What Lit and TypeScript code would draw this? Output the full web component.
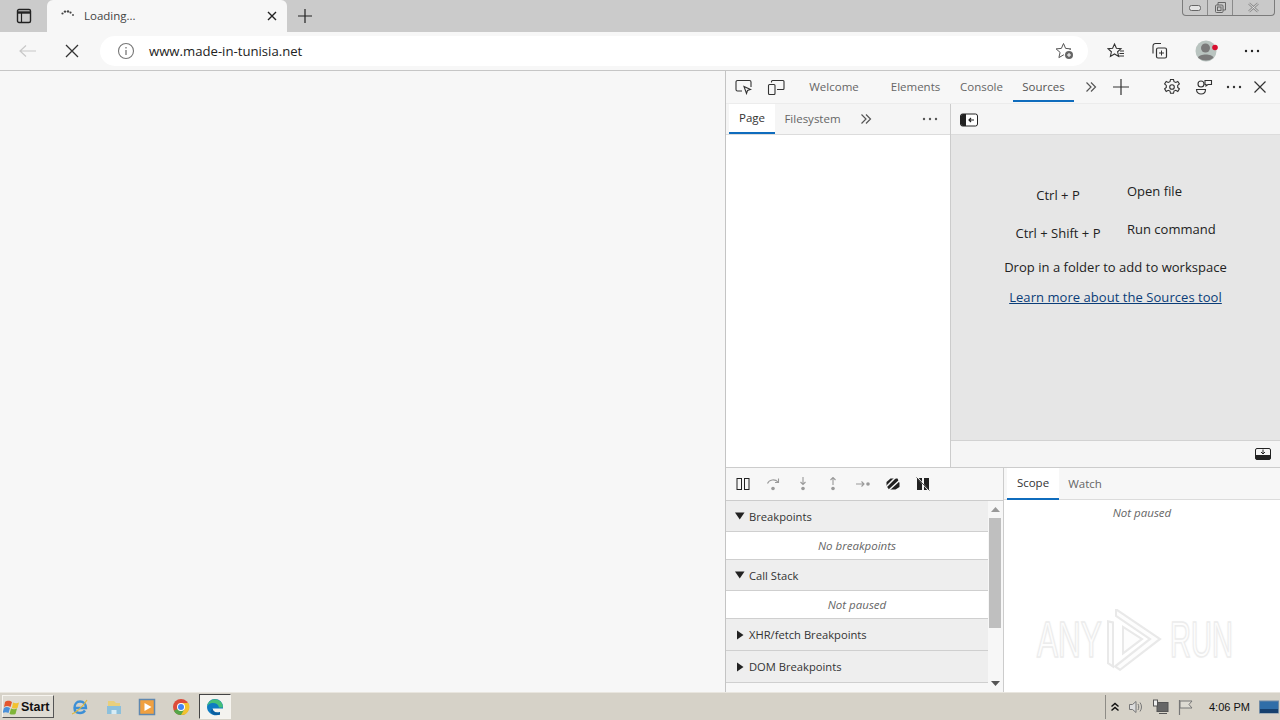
import { LitElement, html, css, svg } from "lit";
import { customElement } from "lit/decorators.js";

const icon = (w: number, h: number, body: unknown) => html`<svg
  width=${w}
  height=${h}
  viewBox="0 0 ${w} ${h}"
  fill="none"
  stroke="currentColor"
  stroke-width="1"
>
  ${body}
</svg>`;

const dots = (c = "#333") => icon(18, 4, svg`<g fill=${c} stroke="none"><circle cx="3" cy="2" r="1.2"/><circle cx="9" cy="2" r="1.2"/><circle cx="15" cy="2" r="1.2"/></g>`);
const chevrons = icon(12, 12, svg`<path d="M1.5 1.5 6 6l-4.5 4.5M6 1.5 10.5 6 6 10.5" stroke-width="1.2"/>`);

@customElement("app-root")
export class AppRoot extends LitElement {
  static styles = css`
    :host {
      display: flex;
      flex-direction: column;
      width: 1280px;
      height: 720px;
      overflow: hidden;
      font-family: "Open Sans", "Noto Sans", sans-serif;
      font-size: 11.5px;
      color: #333;
      background: #f7f7f7;
    }

    /* title strip */
    .strip {
      height: 32px;
      flex: none;
      display: flex;
      background: #cbcbcb;
      position: relative;
    }
    .strip-btn {
      width: 47px;
      display: flex;
      align-items: center;
      justify-content: center;
      color: #222;
    }
    .tab {
      width: 240px;
      height: 32px;
      box-sizing: border-box;
      background: #f7f7f7;
      border-radius: 6px 6px 0 0;
      display: flex;
      align-items: center;
      padding: 0 9px 1px 14px;
      gap: 9px;
      font-size: 11.5px;
      color: #444;
    }
    .tab span {
      flex: 1;
    }
    .newtab {
      width: 36px;
      display: flex;
      align-items: center;
      justify-content: center;
      color: #222;
    }
    .caption {
      position: absolute;
      right: 0;
      top: 0;
      width: 93px;
      height: 16px;
      box-sizing: border-box;
      margin-right: 5px;
      display: grid;
      grid-template-columns: 25px 25px 1fr;
      border: 1px solid #7b7b7b;
      border-top: none;
      border-radius: 0 0 4px 4px;
      background: #c9c9c9;
    }
    .caption div {
      display: flex;
      align-items: center;
      justify-content: center;
      border-right: 1px solid #8a8a8a;
      color: #666;
    }
    .caption div:last-child {
      border-right: none;
    }

    /* address toolbar */
    .toolbar {
      height: 39px;
      flex: none;
      box-sizing: border-box;
      display: flex;
      align-items: center;
      border-bottom: 1px solid #c6c6c6;
      background: #f7f7f7;
    }
    .nav-btn {
      display: flex;
      justify-content: center;
      flex: none;
    }
    .nav-btn.first {
      width: 56px;
      color: #c8c8c8;
    }
    .nav-btn.stop {
      width: 30px;
      margin-left: 1px;
      margin-right: 13px;
      color: #333;
    }
    .url {
      width: 988px;
      flex: none;
      height: 30px;
      box-sizing: border-box;
      background: #fff;
      border-radius: 15px;
      display: flex;
      align-items: center;
      padding: 0 14px 0 17px;
      gap: 14px;
      font-size: 13.15px;
      color: #222;
    }
    .url span {
      flex: 1;
    }
    .tools {
      display: flex;
      align-items: center;
      margin-left: 12px;
    }
    .tool {
      width: 32px;
      display: flex;
      justify-content: center;
      align-items: center;
      color: #333;
      margin-right: 11px;
    }
    .tool.avatar {
      margin-left: 5px;
    }
    .tool.more {
      margin: 0 0 0 2px;
    }

    /* main split */
    .main {
      flex: 1;
      min-height: 0;
      display: flex;
    }
    .page {
      width: 725px;
      flex: none;
      background: #f7f7f7;
    }
    .devtools {
      flex: 1;
      min-width: 0;
      display: flex;
      flex-direction: column;
      border-left: 1px solid #c4c4c4;
      background: #fff;
    }
    .dt-bar {
      height: 33px;
      flex: none;
      box-sizing: border-box;
      display: flex;
      align-items: center;
      background: #f7f7f7;
      border-bottom: 1px solid #ececec;
      color: #666;
    }
    .dt-ic {
      display: flex;
      align-items: center;
      justify-content: center;
      width: 32px;
      flex: none;
      color: #333;
    }
    .dt-ic.first {
      margin-left: 2px;
    }
    .dt-ic.chev {
      width: 33px;
      color: #555;
    }
    .dt-ic.plus {
      width: 30px;
      margin-left: -1px;
    }
    .dt-ic.more {
      width: 28px;
    }
    .dt-ic.close {
      width: 24px;
      margin-right: 8px;
    }
    .dt-tab {
      height: 31px;
      align-self: flex-start;
      box-sizing: border-box;
      display: flex;
      align-items: center;
      justify-content: center;
      padding-top: 1px;
      border-bottom: 2px solid transparent;
      flex: none;
    }
    .dt-tab.welcome {
      width: 82px;
      margin-left: 1px;
    }
    .dt-tab.elements {
      width: 81px;
    }
    .dt-tab.console {
      width: 51px;
    }
    .dt-tab.sources {
      width: 61px;
      margin-left: 6px;
      border-bottom-color: #0f6cbd;
      color: #555;
    }
    .dt-right {
      margin-left: auto;
      display: flex;
      align-items: center;
    }

    .upper {
      height: 363px;
      flex: none;
      display: flex;
      border-bottom: 1px solid #ccc;
    }
    .navigator {
      width: 224px;
      flex: none;
      display: flex;
      flex-direction: column;
      border-right: 1px solid #ccc;
      background: #fff;
    }
    .nav-tabs {
      height: 31px;
      flex: none;
      display: flex;
      align-items: flex-start;
      padding-left: 3px;
      background: #f5f5f5;
      border-bottom: 1px solid #dcdcdc;
      box-sizing: border-box;
      color: #666;
    }
    .nav-tab {
      height: 30px;
      box-sizing: border-box;
      display: flex;
      align-items: center;
      justify-content: center;
      flex: none;
    }
    .nav-tab.on {
      width: 46px;
      padding-bottom: 1px;
      background: #fff;
      border-bottom: 2px solid #0f6cbd;
      color: #333;
    }
    .nav-tab.fs {
      width: 75px;
      padding-bottom: 2px;
    }
    .nav-ic {
      height: 30px;
      display: flex;
      align-items: center;
      justify-content: center;
      flex: none;
      width: 28px;
      margin-left: 2px;
      color: #555;
    }
    .nav-ic.more {
      width: 32px;
      margin-left: auto;
      margin-right: 4px;
    }
    .editor {
      flex: 1;
      min-width: 0;
      display: flex;
      flex-direction: column;
      background: #e6e6e6;
    }
    .ed-top {
      height: 31px;
      flex: none;
      box-sizing: border-box;
      display: flex;
      align-items: center;
      padding: 1px 0 0 9px;
      background: #f5f5f5;
      border-bottom: 1px solid #dcdcdc;
    }
    .ed-body {
      flex: 1;
      display: flex;
      flex-direction: column;
      align-items: center;
      color: #222;
      font-size: 13px;
      padding-top: 47px;
    }
    .shortcuts {
      display: grid;
      grid-template-columns: 100px 96px;
      column-gap: 19px;
      row-gap: 16px;
      margin-bottom: 16px;
    }
    .key {
      text-align: center;
      padding-top: 4px;
      line-height: 18px;
      white-space: nowrap;
    }
    .cmd {
      line-height: 18px;
      white-space: nowrap;
    }
    .drop {
      line-height: 18px;
      letter-spacing: 0.03px;
    }
    .learn {
      margin-top: 12px;
      line-height: 18px;
      color: #0b3d78;
      text-decoration: underline;
      letter-spacing: 0.05px;
    }
    .ed-bottom {
      height: 27px;
      flex: none;
      box-sizing: border-box;
      display: flex;
      align-items: center;
      justify-content: flex-end;
      padding-right: 9px;
      background: #f5f5f5;
      border-top: 1px solid #d2d2d2;
    }

    .lower {
      flex: 1;
      min-height: 0;
      display: flex;
    }
    .debug {
      width: 277px;
      flex: none;
      display: flex;
      flex-direction: column;
      background: #f7f7f7;
      border-right: 1px solid #ccc;
    }
    .dbg-bar {
      height: 33px;
      flex: none;
      box-sizing: border-box;
      display: flex;
      align-items: center;
      padding-left: 2px;
      border-bottom: 1px solid #ccc;
    }
    .dbg-bar div {
      width: 30px;
      display: flex;
      justify-content: center;
      color: #9a9a9a;
    }
    .dbg-bar div.dark {
      color: #222;
    }
    .dbg-body {
      flex: 1;
      min-height: 0;
      display: flex;
    }
    .sections {
      width: 262px;
      flex: none;
      overflow: hidden;
    }
    .sec {
      height: 31px;
      box-sizing: border-box;
      display: flex;
      align-items: center;
      gap: 4px;
      padding-left: 9px;
      background: #eeeeee;
      border-bottom: 1px solid #cfcfcf;
      color: #333;
      font-size: 11.2px;
    }
    .sec.tall {
      height: 32px;
    }
    .empty {
      height: 28px;
      box-sizing: border-box;
      display: flex;
      align-items: center;
      justify-content: center;
      background: #fff;
      border-bottom: 1px solid #cfcfcf;
      font-style: italic;
      color: #666;
    }
    .scroll {
      flex: 1;
      display: flex;
      flex-direction: column;
      align-items: center;
      background: #f7f7f7;
      margin-right: 1px;
    }
    .arrow {
      height: 17px;
      flex: none;
      display: flex;
      align-items: center;
      justify-content: center;
    }
    .track {
      flex: 1;
      width: 12px;
    }
    .thumb {
      height: 110px;
      background: #bfbfbf;
    }

    .scope {
      flex: 1;
      min-width: 0;
      display: flex;
      flex-direction: column;
      position: relative;
      background: #fff;
    }
    .scope-tabs {
      height: 32px;
      flex: none;
      display: flex;
      align-items: center;
      background: #f7f7f7;
      border-bottom: 1px solid #dcdcdc;
      box-sizing: border-box;
      color: #666;
      padding-left: 3px;
    }
    .scope-tab {
      height: 32px;
      box-sizing: border-box;
      display: flex;
      align-items: center;
      justify-content: center;
      width: 52px;
      flex: none;
    }
    .scope-tab.on {
      background: #fff;
      border-bottom: 2px solid #0f6cbd;
      color: #333;
    }
    .paused {
      text-align: center;
      font-style: italic;
      color: #666;
      padding-top: 5px;
    }
    .mark {
      position: absolute;
      left: 33px;
      top: 141px;
      display: flex;
      align-items: center;
      gap: 2px;
      font-family: "Liberation Sans", sans-serif;
      font-size: 50px;
      line-height: 62px;
      color: #fdfdfd;
      -webkit-text-stroke: 1.5px #ececec;
      text-shadow: 0 0 3px #eeeeee;
    }
    .mark b {
      font-weight: 400;
      display: inline-block;
      transform-origin: left center;
      width: 65px;
      transform: scaleX(0.63);
      white-space: nowrap;
    }
    .mark b.r {
      width: 62px;
      margin-left: 4px;
      transform: scaleX(0.58);
    }

    /* taskbar */
    .taskbar {
      height: 28px;
      flex: none;
      box-sizing: border-box;
      display: flex;
      align-items: center;
      background: #d6d2c8;
      border-top: 1px solid #e9e6df;
    }
    .start {
      margin-left: 2px;
      width: 52px;
      height: 23px;
      box-sizing: border-box;
      display: flex;
      align-items: center;
      font-family: "Liberation Sans", sans-serif;
      font-weight: 700;
      font-size: 12.5px;
      color: #111;
      background: #dedbd3;
      border: 1px solid;
      border-color: #f6f4ef #555 #555 #f6f4ef;
    }
    .apps {
      display: flex;
      align-items: center;
      margin-left: 9px;
    }
    .app {
      width: 33.7px;
      height: 25px;
      box-sizing: border-box;
      display: flex;
      align-items: center;
      justify-content: center;
    }
    .app.on {
      width: 32px;
      margin-left: 1px;
      background: #f4f3ef;
      border: 1px solid;
      border-color: #444 #f6f4ef #f6f4ef #444;
    }
    .tray {
      margin-left: auto;
      height: 24px;
      box-sizing: border-box;
      width: 175px;
      display: flex;
      align-items: center;
      border-left: 1px solid #8e8c86;
      font-size: 11px;
      color: #111;
      padding-left: 4px;
      gap: 8px;
    }
    .time {
      font-family: "Liberation Sans", sans-serif;
      margin-left: 7px;
      margin-right: 1px;
      white-space: nowrap;
    }
  `;

  render() {
    return html`
      <div class="strip">
        <div class="strip-btn">
          ${icon(16, 16, svg`<rect x="1.5" y="1.5" width="13" height="13" rx="1.5" stroke-width="1.4"/><path d="M1.5 4.5h13" stroke-width="2.4"/><path d="M5.5 4.5v10" stroke-width="1.2"/>`)}
        </div>
        <div class="tab">
          ${icon(14, 14, svg`<g fill="#444" stroke="none"><circle cx="1.5" cy="4.5" r="1.1"/><circle cx="4" cy="2.6" r="1.2"/><circle cx="7" cy="2.4" r="1.2"/><circle cx="9.5" cy="3.6" r="1.1"/><circle cx="12" cy="6" r=".9"/></g>`)}
          <span>Loading...</span>
          ${icon(12, 12, svg`<path d="M2 2l8 8M10 2l-8 8" stroke-width="1.4" stroke="#222"/>`)}
        </div>
        <div class="newtab">
          ${icon(16, 16, svg`<path d="M8 1v14M1 8h14" stroke-width="1.2"/>`)}
        </div>
        <div class="caption">
          <div>${icon(14, 8, svg`<rect x="1.5" y="1.5" width="11" height="5" rx="2" fill="#e4e4e4"/>`)}</div>
          <div>${icon(13, 13, svg`<rect x="1.5" y="4" width="7.5" height="7.5" rx="1"/><path d="M4 4V1.5h7.5V9H9"/><rect x="3.5" y="6" width="3.5" height="3.5"/>`)}</div>
          <div>${icon(13, 11, svg`<path d="M2 1.5l9 8M11 1.5l-9 8" stroke-width="2.4" stroke="#8e8e8e"/><path d="M2 1.5l9 8M11 1.5l-9 8" stroke-width=".8" stroke="#ececec"/>`)}</div>
        </div>
      </div>

      <div class="toolbar">
        <div class="nav-btn first">
          ${icon(20, 14, svg`<path d="M18 7H2M8 1.5 2 7l6 5.5" stroke-width="1.2"/>`)}
        </div>
        <div class="nav-btn stop">
          ${icon(14, 14, svg`<path d="M1 1l12 12M13 1 1 13" stroke-width="1.3"/>`)}
        </div>
        <div class="url">
          ${icon(18, 18, svg`<circle cx="9" cy="9" r="7.5" stroke="#777" stroke-width="1.1"/><path d="M9 8v5M9 5v1.5" stroke="#777" stroke-width="1.3"/>`)}
          <span>www.made-in-tunisia.net</span>
          ${icon(20, 20, svg`<path d="M9.5 2.5l2.1 4.9 5.3.5-4 3.500 1.200 5.200-4.600-2.700-4.600 2.700 1.200-5.200-4-3.500 5.300-.5z" stroke="#555"/><circle cx="15" cy="14" r="5" fill="#fff" stroke="none"/><circle cx="15" cy="14" r="4" fill="#666" stroke="none"/><path d="M15 12v4M13 14h4" stroke="#fff"/>`)}
        </div>
        <div class="tools">
          <div class="tool">
            ${icon(18, 18, svg`<path d="M7.5 2l1.900 4.200 4.600.5-3.400 3.100 1 4.600-4.100-2.400-4.100 2.400 1-4.600L1 6.700l4.600-.5z" stroke-width="1.1"/><path d="M13 9h4M12.5 11.5h4.500M11.500 14h5.500" stroke-width="1"/>`)}
          </div>
          <div class="tool">
            ${icon(18, 18, svg`<path d="M3 11.5V4a2.500 2.500 0 0 1 2.500-2.500H11" stroke-width="1.1"/><rect x="6.5" y="6" width="10" height="10" rx="1.5" stroke-width="1.2"/><path d="M11.5 8.5v5M9 11h5"/>`)}
          </div>
          <div class="tool avatar">
            ${icon(24, 24, svg`<circle cx="11" cy="12" r="10.5" fill="#b9c4c0" stroke="none"/><circle cx="10.5" cy="9" r="4.5" fill="#7a7a7a" stroke="none"/><path d="M3 18.5c1.500-4 14-4 15.500 0-3 4-12 4-15.500 0z" fill="#7a7a7a" stroke="none"/><circle cx="20" cy="8.5" r="2.8" fill="#d81030" stroke="none"/>`)}
          </div>
          <div class="tool more">${dots("#222")}</div>
        </div>
      </div>

      <div class="main">
        <div class="page"></div>
        <div class="devtools">
          <div class="dt-bar">
            <div class="dt-ic first">
              ${icon(18, 16, svg`<path d="M7 12H2.500A1.500 1.500 0 0 1 1 10.500V3a1.500 1.500 0 0 1 1.500-1.500h12A1.500 1.500 0 0 1 16 3v5" stroke-width="1.1"/><path d="M9 7.5l6.500 3-3 1-1 3z" fill="#f7f7f7" stroke-width="1.1"/>`)}
            </div>
            <div class="dt-ic">
              ${icon(18, 16, svg`<rect x="1.5" y="5.5" width="6.5" height="10" rx="1" stroke-width="1.1"/><path d="M4.5 3.5V2.500a1 1 0 0 1 1-1H16a1 1 0 0 1 1 1v7a1 1 0 0 1-1 1h-6" stroke-width="1.1"/>`)}
            </div>
            <div class="dt-tab welcome">Welcome</div>
            <div class="dt-tab elements">Elements</div>
            <div class="dt-tab console">Console</div>
            <div class="dt-tab sources">Sources</div>
            <div class="dt-ic chev">${chevrons}</div>
            <div class="dt-ic plus">
              ${icon(16, 16, svg`<path d="M8 0v16M0 8h16" stroke-width="1.2"/>`)}
            </div>
            <div class="dt-right">
              <div class="dt-ic">
                ${icon(18, 18, svg`<path d="M7.5 1.5h3l.5 2.200 1.800.8 2-1.100 1.600 2.500-1.700 1.500v2l1.700 1.500-1.600 2.500-2-1.100-1.800.8-.5 2.200h-3l-.5-2.200-1.800-.8-2 1.100-1.600-2.500 1.700-1.500v-2L1.600 5.900l1.600-2.500 2 1.100L7 3.700z" stroke-width="1.1"/><circle cx="9" cy="9" r="2.3" stroke-width="1.1"/>`)}
              </div>
              <div class="dt-ic">
                ${icon(18, 18, svg`<circle cx="6" cy="6" r="3" stroke-width="1.1"/><path d="M1.5 11.5h9c0 6-9 6-9 0z" stroke-width="1.1"/><path d="M10 2.5h6.500v4H13l-2 1.500V6.500h-1z" stroke-width="1.1"/>`)}
              </div>
              <div class="dt-ic more">${dots()}</div>
              <div class="dt-ic close">
                ${icon(14, 14, svg`<path d="M1.5 1.5l11 11M12.500 1.500l-11 11" stroke-width="1.2"/>`)}
              </div>
            </div>
          </div>

          <div class="upper">
            <div class="navigator">
              <div class="nav-tabs">
                <div class="nav-tab on">Page</div>
                <div class="nav-tab fs">Filesystem</div>
                <div class="nav-ic">${chevrons}</div>
                <div class="nav-ic more">${dots("#555")}</div>
              </div>
            </div>
            <div class="editor">
              <div class="ed-top">
                ${icon(18, 14, svg`<rect x=".5" y="1" width="17" height="12" rx="2" fill="#fff" stroke="#222"/><path d="M1 3a2 2 0 0 1 2-2h3v12H3a2 2 0 0 1-2-2z" fill="#222" stroke="none"/><path d="M14 7H9M11 5 9 7l2 2" stroke="#222" stroke-width="1.2"/>`)}
              </div>
              <div class="ed-body">
                <div class="shortcuts">
                  <div class="key">Ctrl + P</div>
                  <div class="cmd">Open file</div>
                  <div class="key">Ctrl + Shift + P</div>
                  <div class="cmd">Run command</div>
                </div>
                <div class="drop">Drop in a folder to add to workspace</div>
                <div class="learn">Learn more about the Sources tool</div>
              </div>
              <div class="ed-bottom">
                ${icon(16, 12, svg`<rect x=".5" y=".5" width="15" height="11" rx="1.5" stroke="#222"/><path d="M.5 7h15v3a1.500 1.500 0 0 1-1.500 1.500H2A1.500 1.500 0 0 1 .5 10z" fill="#222" stroke="none"/><path d="M8 1.5V6M6 4l2 2 2-2" stroke="#222"/>`)}
              </div>
            </div>
          </div>

          <div class="lower">
            <div class="debug">
              <div class="dbg-bar">
                <div class="dark">
                  ${icon(14, 12, svg`<rect x="1" y=".5" width="4.5" height="11"/><rect x="8.5" y=".5" width="4.5" height="11"/>`)}
                </div>
                <div>
                  ${icon(14, 14, svg`<path d="M1.5 6.5C3 2.500 9 1.500 12 5" stroke-width="1.1"/><path d="M12.5 1.5V5.500H9" stroke-width="1.1"/><circle cx="7" cy="11.5" r="1.8" fill="currentColor" stroke="none"/>`)}
                </div>
                <div>
                  ${icon(14, 14, svg`<path d="M7 0v7M4.500 5 7 7.500 9.500 5" stroke-width="1.1"/><circle cx="7" cy="11.5" r="1.8" fill="currentColor" stroke="none"/>`)}
                </div>
                <div>
                  ${icon(14, 14, svg`<path d="M7 8V1M4.500 3 7 .5 9.500 3" stroke-width="1.1"/><circle cx="7" cy="11.5" r="1.8" fill="currentColor" stroke="none"/>`)}
                </div>
                <div>
                  ${icon(16, 10, svg`<path d="M1 5h8M6.500 2.500 9 5 6.500 7.500" stroke-width="1.1"/><circle cx="13" cy="5" r="1.8" fill="currentColor" stroke="none"/>`)}
                </div>
                <div class="dark">
                  ${icon(14, 14, svg`<path d="M4.500 1.500h7L13.500 6v4l-4 2.500H3L.5 9V5z" fill="#222" stroke="none"/><path d="M0 10 10 0M3 13 14 3" stroke="#f7f7f7" stroke-width="1.5"/>`)}
                </div>
                <div class="dark">
                  ${icon(14, 14, svg`<path d="M1 1h5v12H1zM8 1h5v12H8z" fill="#222" stroke="none"/><path d="M1 0l12 14" stroke="#f7f7f7" stroke-width="1.2"/><path d="M.5 .5l13 13" stroke="#222" stroke-width=".8"/>`)}
                </div>
              </div>
              <div class="dbg-body">
                <div class="sections">
                  <div class="sec">${this.tri(true)}Breakpoints</div>
                  <div class="empty">No breakpoints</div>
                  <div class="sec">${this.tri(true)}Call Stack</div>
                  <div class="empty">Not paused</div>
                  <div class="sec tall">${this.tri(false)}XHR/fetch Breakpoints</div>
                  <div class="sec tall">${this.tri(false)}DOM Breakpoints</div>
                </div>
                <div class="scroll">
                  <div class="arrow">
                    ${icon(9, 5, svg`<path d="M4.500 0 9 5H0z" fill="#999" stroke="none"/>`)}
                  </div>
                  <div class="track"><div class="thumb"></div></div>
                  <div class="arrow">
                    ${icon(9, 5, svg`<path d="M4.500 5 9 0H0z" fill="#555" stroke="none"/>`)}
                  </div>
                </div>
              </div>
            </div>
            <div class="scope">
              <div class="scope-tabs">
                <div class="scope-tab on">Scope</div>
                <div class="scope-tab">Watch</div>
              </div>
              <div class="paused">Not paused</div>
              <div class="mark">
                <b>ANY</b>
                ${icon(60, 62, svg`<g stroke="#e9e9e9" stroke-width="2" fill="#fdfdfd" transform="translate(0 -3) scale(1 1.1)"><path d="M4 14v38l5 3V15z"/><path d="M12 3l44 27-40 28-5-3 35-25L12 9z"/><path d="M19 19l19 11-19 13z"/></g>`)}
                <b class="r">RUN</b>
              </div>
            </div>
          </div>
        </div>
      </div>

      <div class="taskbar">
        <div class="start">
          ${icon(18, 18, svg`<g stroke="none"><path d="M2 4c3-2 5-1 7 0L7.500 9C5.500 8 3.500 7.500 1 9z" fill="#e4572e"/><path d="M10 4.500c2 1 4 1 6 0L14.500 10c-2 1-4 .5-5.500 0z" fill="#f2c230"/><path d="M1 10c2-1.500 4-1 6 0l-1.500 5c-2-1-3.500-1-6 0z" fill="#4a90d9"/><path d="M8 10.500c2 1 4 1 6 0L12.500 16c-2 1-4 .5-6 0z" fill="#7fb539"/></g>`)}
          Start
        </div>
        <div class="apps">
          <div class="app">
            ${icon(18, 18, svg`<path d="M3.500 10h11.500C15 6 12.500 3.500 9 3.500 5.500 3.500 3.500 6.500 3.500 10c0 3.500 2.500 5 5.500 5 2 0 4-1 5-2.500" stroke="#3c8fd6" stroke-width="2.4"/><path d="M1 16c3-1 10-6 15-14" stroke="#e0b93a" stroke-width="1.2"/>`)}
          </div>
          <div class="app">
            ${icon(18, 18, svg`<path d="M3 3h6l2 2h4v3H3z" fill="#e8cf7c" stroke="none"/><path d="M2 8h14v8H2z" fill="#8cc0dc" stroke="none"/><path d="M6.500 16v-4h5v4" fill="#d8ecf5" stroke="none"/>`)}
          </div>
          <div class="app">
            ${icon(18, 18, svg`<rect x="1.5" y="1.5" width="15" height="15" fill="#f0a040" stroke="#5f88b0" stroke-width="1.5"/><path d="M6.500 5l7 4-7 4z" fill="#fff" stroke="none"/>`)}
          </div>
          <div class="app">
            ${icon(18, 18, svg`<g stroke="none"><circle cx="9" cy="9" r="8" fill="#dd4b39"/><path d="M9 9 1.900 12.700A8 8 0 0 0 9 17c2 0 3.500-.5 5-2z" fill="#55a648"/><path d="M9 5h7.300A8 8 0 0 1 9 17l3.500-6z" fill="#f2c230"/><circle cx="9" cy="9" r="4" fill="#fff"/><circle cx="9" cy="9" r="3" fill="#4285f4"/></g>`)}
          </div>
          <div class="app on">
            ${icon(18, 18, svg`<g stroke="none"><path d="M1 9a8 8 0 0 1 16 0v1.500H6.500c0 3 3.500 5 7.500 3.500v2.500C8.500 19 1 15.500 1 9z" fill="#0f7cc2"/><path d="M1 9c1-5 11-6 12 .5H17A8 8 0 0 0 1 9z" fill="#46c078"/><path d="M6.500 10.500c0 3 3.500 5 7.500 3.500v2.500c-4 1.500-9 0-9.500-3.500z" fill="#0a5fa0"/></g>`)}
          </div>
        </div>
        <div class="tray">
          ${icon(10, 10, svg`<path d="M1.500 4.500 5 1.500l3.500 3M1.500 8.500 5 5.500l3.500 3" stroke="#111" stroke-width="1.5"/>`)}
          ${icon(16, 16, svg`<path d="M1.500 5.500h3L8 2.500v11l-3.500-3h-3z" fill="#dcdcdc" stroke="#777"/><path d="M10 5c1 2 1 4 0 6M12 3.500c2 3 2 6 0 9" stroke="#777"/>`)}
          ${icon(17, 16, svg`<rect x="5" y="3.500" width="11" height="9" fill="#666" stroke="#555"/><rect x="1.500" y="1" width="4" height="6" fill="#eee" stroke="#555"/><path d="M7 14.500h8" stroke="#555"/>`)}
          ${icon(17, 16, svg`<path d="M2.500 1v15" stroke="#777" stroke-width="1.2"/><path d="M3 2h12l-3 3.500 3 3.500H3z" fill="#dedbd3" stroke="#777"/>`)}
          <span class="time">4:06 PM</span>
          ${icon(20, 16, svg`<rect x=".5" y="2" width="19" height="12" fill="#2f6ea8" stroke="#6f8aa5"/><path d="M1 10h18v4H1z" fill="#16406e" stroke="none"/>`)}
        </div>
      </div>
    `;
  }

  tri(open: boolean) {
    return open
      ? icon(10, 8, svg`<path d="M0 .5h9.500L4.750 7.500z" fill="#222" stroke="none"/>`)
      : icon(10, 10, svg`<path d="M2 .5 8.500 5 2 9.500z" fill="#222" stroke="none"/>`);
  }
}
